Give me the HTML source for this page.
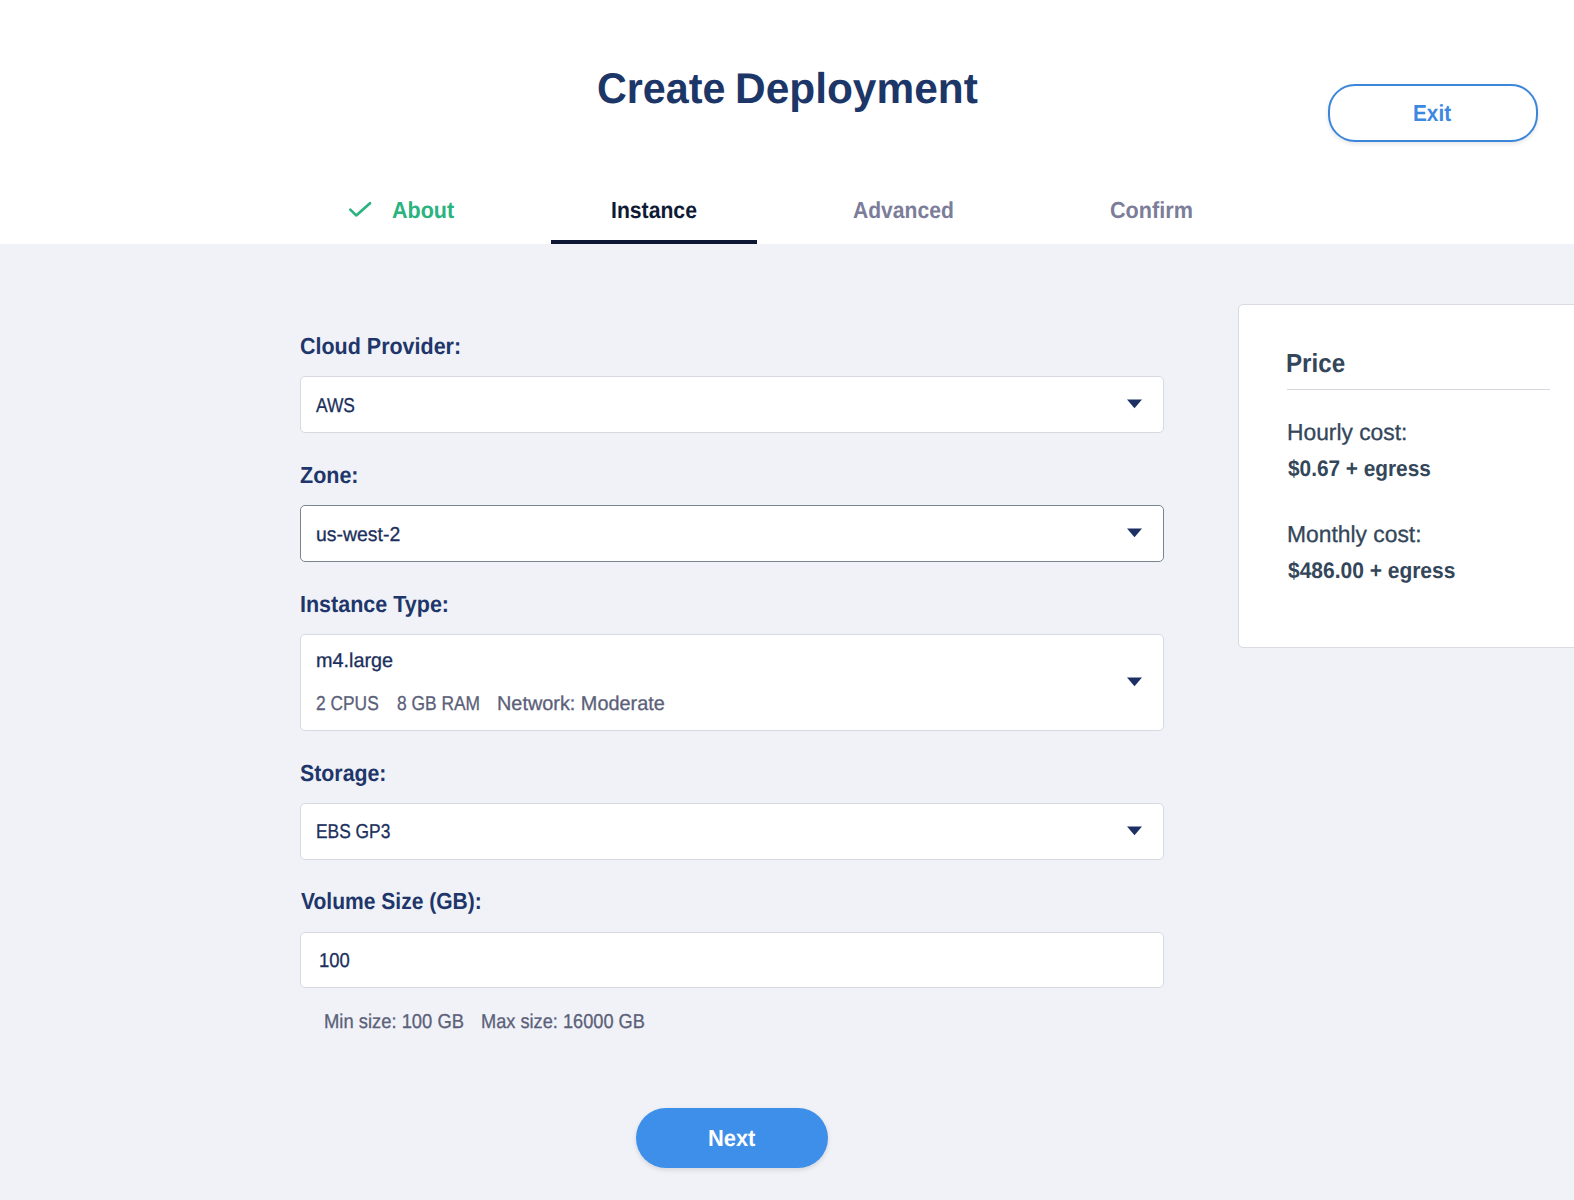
<!DOCTYPE html>
<html><head><meta charset="utf-8"><style>
html,body{margin:0;padding:0;}
body{width:1574px;height:1200px;position:relative;overflow:hidden;background:#f0f2f7;font-family:"Liberation Sans",sans-serif;}
.top{position:absolute;left:0;top:0;width:1574px;height:244px;background:#ffffff;}
.t{position:absolute;line-height:1;white-space:nowrap;transform-origin:0 0;font-family:"Liberation Sans",sans-serif;text-rendering:geometricPrecision;}
.box{position:absolute;left:300px;width:862px;background:#fff;border:1px solid #d6d9e0;border-radius:5px;}
</style></head><body>
<div class="top"></div>
<div style="position:absolute;left:551px;top:240px;width:206px;height:4px;background:#0d1633"></div>
<div style="position:absolute;left:1328px;top:84px;width:206px;height:54px;border:2px solid #3b86da;border-radius:27px;background:#fff;box-shadow:0 2px 4px rgba(0,0,0,0.10)"></div>
<div class="box" style="top:376px;height:55px"></div>
<div class="box" style="top:505px;height:55px;border-color:#7a8593"></div>
<div class="box" style="top:634px;height:95px"></div>
<div class="box" style="top:803px;height:55px"></div>
<div class="box" style="top:932px;height:54px"></div>
<div style="position:absolute;left:1238px;top:304px;width:400px;height:342px;background:#fff;border:1px solid #d8dbe1;border-radius:5px"></div>
<div style="position:absolute;left:1287px;top:389px;width:263px;height:1px;background:#d5d8de"></div>
<div style="position:absolute;left:636px;top:1108px;width:192px;height:60px;border-radius:30px;background:#3d8fe9;box-shadow:0 2px 5px rgba(0,0,0,0.12)"></div>
<svg style="position:absolute;left:346px;top:199px" width="28" height="21" viewBox="0 0 28 21"><path d="M4.3 10.6 L10.2 16.4 L24 4.2" fill="none" stroke="#2ab27f" stroke-width="2.7" stroke-linecap="round" stroke-linejoin="round"/></svg>
<svg style="position:absolute;left:1126px;top:399.3px" width="17" height="11" viewBox="0 0 17 11"><path d="M1 0.6 L16 0.6 L8.5 9.2 Z" fill="#1c3063"/></svg><svg style="position:absolute;left:1126px;top:528.3px" width="17" height="11" viewBox="0 0 17 11"><path d="M1 0.6 L16 0.6 L8.5 9.2 Z" fill="#1c3063"/></svg><svg style="position:absolute;left:1126px;top:677.3px" width="17" height="11" viewBox="0 0 17 11"><path d="M1 0.6 L16 0.6 L8.5 9.2 Z" fill="#1c3063"/></svg><svg style="position:absolute;left:1126px;top:826.3px" width="17" height="11" viewBox="0 0 17 11"><path d="M1 0.6 L16 0.6 L8.5 9.2 Z" fill="#1c3063"/></svg>
<span class="t" style="left:596.71px;top:67.80px;font-size:43.0px;font-weight:700;color:#1d3668;transform:scaleX(0.9593)">Create</span><span class="t" style="left:734.51px;top:67.80px;font-size:43.0px;font-weight:700;color:#1d3668;transform:scaleX(0.9865)">Deployment</span><span class="t" style="left:392.32px;top:198.80px;font-size:23.26px;font-weight:700;color:#2ab27f;transform:scaleX(0.9260)">About</span><span class="t" style="left:611.15px;top:198.80px;font-size:23.26px;font-weight:700;color:#0f1a35;transform:scaleX(0.9110)">Instance</span><span class="t" style="left:852.53px;top:198.80px;font-size:23.26px;font-weight:700;color:#7b7d99;transform:scaleX(0.9068)">Advanced</span><span class="t" style="left:1109.98px;top:198.80px;font-size:23.26px;font-weight:700;color:#7b7d99;transform:scaleX(0.9303)">Confirm</span><span class="t" style="left:1413.38px;top:101.80px;font-size:23.1px;font-weight:700;color:#3d89df;transform:scaleX(0.8990)">Exit</span><span class="t" style="left:300.08px;top:334.70px;font-size:23.26px;font-weight:700;color:#20366a;transform:scaleX(0.9238)">Cloud Provider:</span><span class="t" style="left:316.03px;top:395.80px;font-size:20.06px;font-weight:400;color:#1b2f5c;transform:scaleX(0.8670);-webkit-text-stroke:0.3px #1b2f5c">AWS</span><span class="t" style="left:300.16px;top:463.90px;font-size:23.26px;font-weight:700;color:#20366a;transform:scaleX(0.9245)">Zone:</span><span class="t" style="left:315.76px;top:524.80px;font-size:20.06px;font-weight:400;color:#1b2f5c;transform:scaleX(0.9689);-webkit-text-stroke:0.3px #1b2f5c">us-west-2</span><span class="t" style="left:299.82px;top:592.90px;font-size:23.26px;font-weight:700;color:#20366a;transform:scaleX(0.9253)">Instance Type:</span><span class="t" style="left:315.72px;top:650.60px;font-size:20.06px;font-weight:400;color:#1b2f5c;transform:scaleX(0.9886);-webkit-text-stroke:0.3px #1b2f5c">m4.large</span><span class="t" style="left:315.62px;top:693.80px;font-size:20.06px;font-weight:400;color:#5b6079;transform:scaleX(0.8664);-webkit-text-stroke:0.3px #5b6079">2 CPUS</span><span class="t" style="left:396.78px;top:693.80px;font-size:20.06px;font-weight:400;color:#5b6079;transform:scaleX(0.8674);-webkit-text-stroke:0.3px #5b6079">8 GB RAM</span><span class="t" style="left:497.46px;top:693.80px;font-size:20.06px;font-weight:400;color:#5b6079;transform:scaleX(0.9907);-webkit-text-stroke:0.3px #5b6079">Network: Moderate</span><span class="t" style="left:299.82px;top:761.90px;font-size:23.26px;font-weight:700;color:#20366a;transform:scaleX(0.9167)">Storage:</span><span class="t" style="left:315.66px;top:821.80px;font-size:20.06px;font-weight:400;color:#1b2f5c;transform:scaleX(0.8659);-webkit-text-stroke:0.3px #1b2f5c">EBS GP3</span><span class="t" style="left:300.61px;top:890.20px;font-size:23.26px;font-weight:700;color:#20366a;transform:scaleX(0.9049)">Volume Size (GB):</span><span class="t" style="left:318.75px;top:950.80px;font-size:20.06px;font-weight:400;color:#1b2f5c;transform:scaleX(0.9222);-webkit-text-stroke:0.3px #1b2f5c">100</span><span class="t" style="left:323.58px;top:1011.70px;font-size:20.06px;font-weight:400;color:#5b6079;transform:scaleX(0.9171);-webkit-text-stroke:0.3px #5b6079">Min size: 100 GB</span><span class="t" style="left:480.79px;top:1011.70px;font-size:20.06px;font-weight:400;color:#5b6079;transform:scaleX(0.9077);-webkit-text-stroke:0.3px #5b6079">Max size: 16000 GB</span><span class="t" style="left:707.90px;top:1126.90px;font-size:23.26px;font-weight:700;color:#ffffff;transform:scaleX(0.9400)">Next</span><span class="t" style="left:1286.29px;top:349.90px;font-size:26.16px;font-weight:700;color:#33465a;transform:scaleX(0.9240)">Price</span><span class="t" style="left:1286.89px;top:420.80px;font-size:23.1px;font-weight:400;color:#33465a;transform:scaleX(0.9869);-webkit-text-stroke:0.3px #33465a">Hourly cost:</span><span class="t" style="left:1287.62px;top:457.80px;font-size:22.5px;font-weight:700;color:#33465a;transform:scaleX(0.9244)">$0.67 + egress</span><span class="t" style="left:1286.89px;top:522.80px;font-size:23.1px;font-weight:400;color:#33465a;transform:scaleX(0.9888);-webkit-text-stroke:0.3px #33465a">Monthly cost:</span><span class="t" style="left:1287.62px;top:559.60px;font-size:22.5px;font-weight:700;color:#33465a;transform:scaleX(0.9322)">$486.00 + egress</span>
</body></html>
